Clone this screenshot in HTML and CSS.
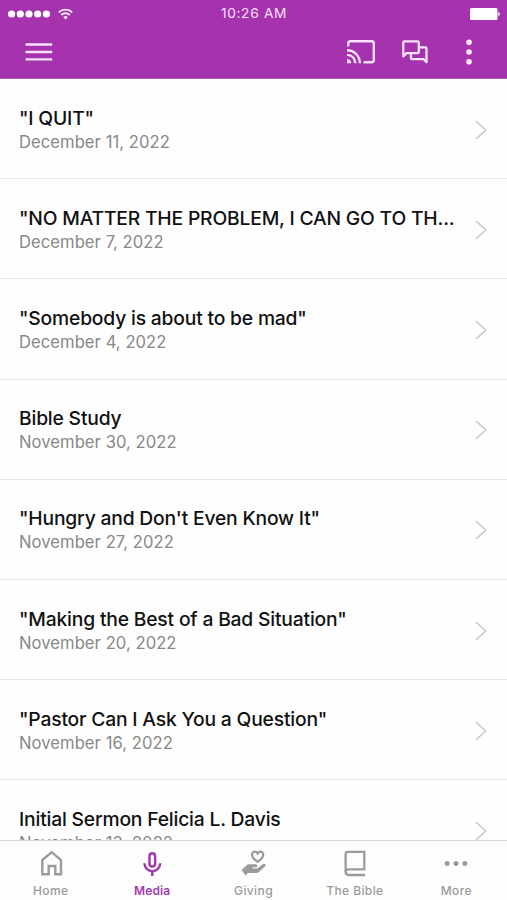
FILE: index.html
```html
<!DOCTYPE html>
<html lang="en">

<head>
  <meta charset="UTF-8" />
  <meta name="viewport" content="width=device-width, initial-scale=1.0" />
  <title>Media</title>
  <link rel="stylesheet" href="styles.css">
</head>

<body>
  <div class="app">
    <div class="header">
      <div class="status">
        <div class="signal">
          <svg width="42" height="8" viewBox="0 0 42 8" fill="#fff">
            <circle cx="3.6" cy="4" r="3.6" />
            <circle cx="12.3" cy="4" r="3.6" />
            <circle cx="21" cy="4" r="3.6" />
            <circle cx="29.7" cy="4" r="3.6" />
            <circle cx="38.4" cy="4" r="3.6" />
          </svg>
          <svg class="wifi" width="15" height="12" viewBox="0 0 15 12" fill="none" stroke="#fce9ff" stroke-width="1.9">
            <path d="M.8 4.3a9.6 9.6 0 0 1 13.4 0M3.2 7a6.2 6.2 0 0 1 8.6 0" />
            <path d="M7.5 11.6 5.2 9.1a3.2 3.2 0 0 1 4.6 0z" fill="#fce9ff" stroke="none" />
          </svg>
        </div>
        <span class="time">10:26 AM</span>
        <svg class="battery" width="30" height="12" viewBox="0 0 30 12" fill="#fff">
          <rect width="27.5" height="12" rx="1.5" />
          <path d="M28.3 4c2 .6 2 3.4 0 4z" />
        </svg>
      </div>
      <div class="toolbar">
        <svg class="menu" width="28" height="20" viewBox="0 0 28 20" stroke="#fbe3ff" stroke-width="2.4" stroke-linecap="round">
          <path d="M1.6 2.5h24.6M1.6 10h24.6M1.6 17.4h24.6" />
        </svg>
        <svg class="cast" width="28" height="24" viewBox="0 0 28 24" fill="none" stroke="#fbe3ff" stroke-width="2.4">
          <path d="M1.2 6.5V3.4Q1.2 1.2 3.4 1.2H24.6Q26.8 1.2 26.8 3.4V20Q26.8 22.2 24.6 22.2H16.5M0 10.2a12.8 12.8 0 0 1 12.8 13M0 14.9a8 8 0 0 1 8.2 8.3" />
          <path d="M0 19a4.2 4.2 0 0 1 4.2 4.2H0z" fill="#fbe3ff" stroke="none" />
        </svg>
        <svg class="chat" width="26" height="24" viewBox="0 0 26 24" fill="none" stroke="#fbe3ff" stroke-width="2.3" stroke-linejoin="round">
          <path d="M1.3 16.5V2.6Q1.3 1.3 2.6 1.3H15.5Q16.8 1.3 16.8 2.6V11.9Q16.8 13.2 15.5 13.2H4.3z" />
          <path d="M17 7.3H23.2Q24.5 7.3 24.5 8.6V22.2L21.6 19.2H10.3Q9 19.2 9 17.9V13.5" />
        </svg>
        <svg class="dots" width="6" height="26" viewBox="0 0 6 26" fill="#fdeeff">
          <circle cx="3" cy="3.3" r="2.8" />
          <circle cx="3" cy="13" r="2.8" />
          <circle cx="3" cy="22.7" r="2.8" />
        </svg>
      </div>
    </div>

    <div class="list">
      <div class="item">
        <div class="info">
          <p class="title">"I QUIT"</p>
          <p class="date">December 11, 2022</p>
        </div>
        <svg class="arrow" viewBox="0 0 12 20"><path d="M1 1l9.6 9L1 19" /></svg>
      </div>
      <div class="item">
        <div class="info">
          <p class="title">"NO MATTER THE PROBLEM, I CAN GO TO TH...</p>
          <p class="date">December 7, 2022</p>
        </div>
        <svg class="arrow" viewBox="0 0 12 20"><path d="M1 1l9.6 9L1 19" /></svg>
      </div>
      <div class="item">
        <div class="info">
          <p class="title">"Somebody is about to be mad"</p>
          <p class="date">December 4, 2022</p>
        </div>
        <svg class="arrow" viewBox="0 0 12 20"><path d="M1 1l9.6 9L1 19" /></svg>
      </div>
      <div class="item">
        <div class="info">
          <p class="title">Bible Study</p>
          <p class="date">November 30, 2022</p>
        </div>
        <svg class="arrow" viewBox="0 0 12 20"><path d="M1 1l9.6 9L1 19" /></svg>
      </div>
      <div class="item">
        <div class="info">
          <p class="title">"Hungry and Don't Even Know It"</p>
          <p class="date">November 27, 2022</p>
        </div>
        <svg class="arrow" viewBox="0 0 12 20"><path d="M1 1l9.6 9L1 19" /></svg>
      </div>
      <div class="item">
        <div class="info">
          <p class="title">"Making the Best of a Bad Situation"</p>
          <p class="date">November 20, 2022</p>
        </div>
        <svg class="arrow" viewBox="0 0 12 20"><path d="M1 1l9.6 9L1 19" /></svg>
      </div>
      <div class="item">
        <div class="info">
          <p class="title">"Pastor Can I Ask You a Question"</p>
          <p class="date">November 16, 2022</p>
        </div>
        <svg class="arrow" viewBox="0 0 12 20"><path d="M1 1l9.6 9L1 19" /></svg>
      </div>
      <div class="item">
        <div class="info">
          <p class="title">Initial Sermon Felicia L. Davis</p>
          <p class="date">November 13, 2022</p>
        </div>
        <svg class="arrow" viewBox="0 0 12 20"><path d="M1 1l9.6 9L1 19" /></svg>
      </div>
    </div>

    <div class="tabbar">
      <a class="tab">
        <svg width="28" height="28" viewBox="0 0 28 28" fill="none" stroke="currentColor" stroke-width="2.4">
          <path d="M5.3 11 14.7 3.2l9.3 7.8v14.2h-5.7V17h-6.6v8.2H5.3z" />
        </svg>
        <span>Home</span>
      </a>
      <a class="tab active">
        <svg width="28" height="28" viewBox="0 0 28 28" fill="none" stroke="currentColor" stroke-width="2.5">
          <rect x="11.5" y="4.2" width="5.6" height="13.4" rx="2.8" />
          <path d="M6.4 14.2c.5 10.6 15.3 10.6 15.8 0M14.3 22v5" />
        </svg>
        <span>Media</span>
      </a>
      <a class="tab">
        <svg width="28" height="28" viewBox="0 0 28 28">
          <path d="M17.6 12.7C9.4 7.5 11.8 2.5 14.9 2.7c1.5 0 2.2.8 2.7 1.6.5-.8 1.2-1.6 2.7-1.6 3.1-.2 5.5 4.8-2.7 10z" fill="none" stroke="currentColor" stroke-width="2.2" />
          <path d="M1.6 20.9 6.6 16.2q1-.9 2.4-.9h6.8q1.7.2 1.5 1.7-.2 1.3-1.8 1.3h-3v1.1h4.2q1.1 0 2-.8l4.2-3.5q1.4-.9 2.4.1.9 1.2-.3 2.3l-6.2 5.6q-1.2 1-2.8 1H7.8l-2.2 2.3z" fill="currentColor" />
        </svg>
        <span>Giving</span>
      </a>
      <a class="tab">
        <svg width="28" height="28" viewBox="0 0 28 28" fill="none" stroke="currentColor" stroke-width="2.3">
          <path d="M24 26H7.8q-3.2-.2-3.2-3.2V5.2Q4.6 2.8 7 2.8h16.3v17.6H7.5q-2.9.3-2.9 2.4" />
        </svg>
        <span>The Bible</span>
      </a>
      <a class="tab">
        <svg width="28" height="28" viewBox="0 0 28 28" fill="currentColor">
          <circle cx="5.1" cy="14.5" r="2.5" />
          <circle cx="14" cy="14.5" r="2.5" />
          <circle cx="22.9" cy="14.5" r="2.5" />
        </svg>
        <span>More</span>
      </a>
    </div>
  </div>
</body>

</html>
```
FILE: styles.css
```css
* {
  padding: 0;
  margin: 0;
  box-sizing: border-box;
}

body {
  font-family: Inter, "Liberation Sans", sans-serif;
  background: #fefefe;
}

svg {
  display: block;
  flex: none;
}

.app {
  display: flex;
  flex-direction: column;
  height: 900px;
  overflow: hidden;
}

.header {
  flex: none;
  height: 79px;
  background: #a533ad;
  border-bottom: 1px solid #a866ae;
}

.status {
  display: grid;
  grid-template-columns: 1fr auto 1fr;
  align-items: center;
  height: 27px;
  padding: 0 7px 0 8px;
}

.signal {
  display: flex;
  align-items: center;
}

.wifi {
  margin-left: 8px;
}

.time {
  font-size: 13.7px;
  line-height: 27px;
  letter-spacing: 0.7px;
  color: #fbe0ff;
}

.battery {
  margin-left: auto;
}

.toolbar {
  display: flex;
  align-items: center;
  height: 50px;
  padding: 0 35px 0 25px;
}

.cast {
  margin-left: auto;
}

.chat {
  margin-left: 27px;
}

.dots {
  margin-left: 38px;
}

.list {
  flex: 1;
  min-height: 0;
  overflow: hidden;
}

.item {
  display: flex;
  align-items: center;
  height: 100.2px;
  padding: 2px 20px 0 19px;
  border-bottom: 1px solid #e6e6e6;
}

.info {
  flex: 1;
  min-width: 0;
}

.title {
  font-size: 19.3px;
  font-weight: 500;
  line-height: 24px;
  letter-spacing: -0.19px;
  white-space: nowrap;
  color: #111;
}

.date {
  padding-top: 1px;
  font-size: 16.6px;
  line-height: 23px;
  letter-spacing: 0.06px;
  white-space: nowrap;
  color: #888;
}

.arrow {
  width: 12px;
  height: 20px;
  fill: none;
  stroke: #c8c8c8;
  stroke-width: 1.5;
}

.tabbar {
  flex: none;
  display: flex;
  height: 60px;
  background: #fdfdfd;
  border-top: 1px solid #d4d4d4;
}

.tab {
  flex: 1;
  display: flex;
  flex-direction: column;
  align-items: center;
  padding-top: 8px;
  font-size: 12px;
  font-weight: 500;
  color: #9b9b9b;
}

.tab span {
  margin-top: 6px;
  line-height: 16px;
  letter-spacing: 0.4px;
}

.tab.active {
  color: #a23bad;
}

.tab.active span {
  font-weight: 600;
  letter-spacing: 0.1px;
}
```
